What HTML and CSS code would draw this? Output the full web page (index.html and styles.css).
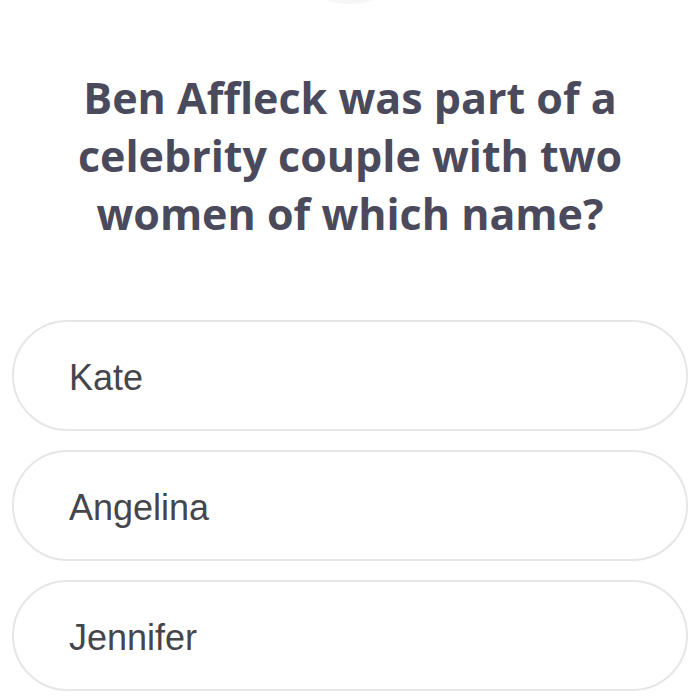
FILE: index.html
```html
<!DOCTYPE html>
<html>
<head>
<meta charset="utf-8">
<link rel="stylesheet" href="styles.css">
</head>
<body>
<div class="screen">
  <div class="top-dot"></div>
  <h1 class="question">Ben Affleck was part of a celebrity couple with two women of which name?</h1>
  <div class="options">
    <div class="option">Kate</div>
    <div class="option">Angelina</div>
    <div class="option">Jennifer</div>
  </div>
</div>
</body>
</html>
```
FILE: styles.css
```css
html, body {
  margin: 0;
  padding: 0;
  background: #ffffff;
}
.screen {
  width: 700px;
  height: 700px;
  position: relative;
  overflow: hidden;
  display: flex;
  flex-direction: column;
  align-items: center;
}
.top-dot {
  position: absolute;
  top: -40px;
  left: 310px;
  width: 80px;
  height: 44px;
  border-radius: 50%;
  background: #f6f6f8;
}
.question {
  margin: 69px 0 0 0;
  width: 620px;
  text-align: center;
  font-family: "Open Sans", sans-serif;
  font-weight: 700;
  font-size: 43px;
  line-height: 58px;
  letter-spacing: 0;
  color: #4a4a5c;
}
.options {
  margin-top: 77px;
  width: 676px;
  display: flex;
  flex-direction: column;
  gap: 19px;
}
.option {
  box-sizing: border-box;
  height: 111px;
  border: 2px solid #e6e6e9;
  border-radius: 56px;
  padding: 4px 0 0 55px;
  display: flex;
  align-items: center;
  font-family: "Liberation Sans", Arial, sans-serif;
  font-size: 36px;
  color: #45454c;
}
```
